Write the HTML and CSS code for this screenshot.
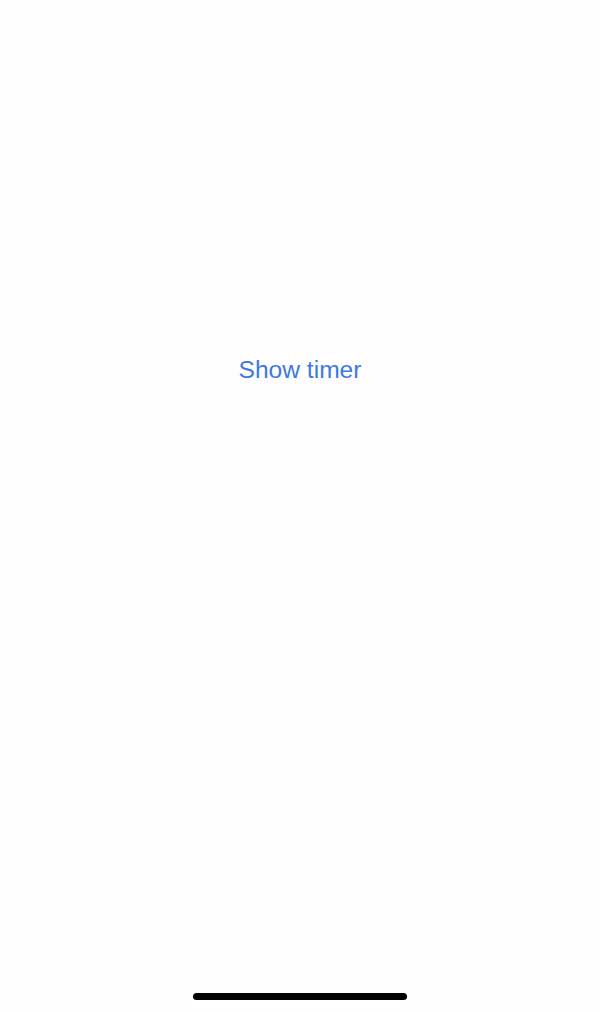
FILE: index.html
```html
<!DOCTYPE html>
<html>
<head>
<meta charset="utf-8">
<link rel="stylesheet" href="styles.css">
</head>
<body>
<div class="screen">
  <div class="content">
    <button class="link-btn">Show timer</button>
  </div>
  <div class="home-bar"><div class="indicator"></div></div>
</div>
</body>
</html>
```
FILE: styles.css
```css
html, body {
  margin: 0;
  padding: 0;
  background: #fffdfe;
}
.screen {
  width: 600px;
  height: 1012px;
  display: flex;
  flex-direction: column;
  background: #fffdfe;
}
.content {
  height: 740px;
  display: flex;
  align-items: center;
  justify-content: center;
}
.link-btn {
  background: none;
  border: none;
  padding: 0;
  font-family: "Liberation Sans", Arial, sans-serif;
  font-size: 24.6px;
  color: #3a7be0;
  cursor: pointer;
}
.home-bar {
  flex: 1;
  display: flex;
  align-items: flex-end;
  justify-content: center;
  padding-bottom: 12px;
}
.indicator {
  width: 214px;
  height: 7px;
  border-radius: 4px;
  background: #000;
}
```
